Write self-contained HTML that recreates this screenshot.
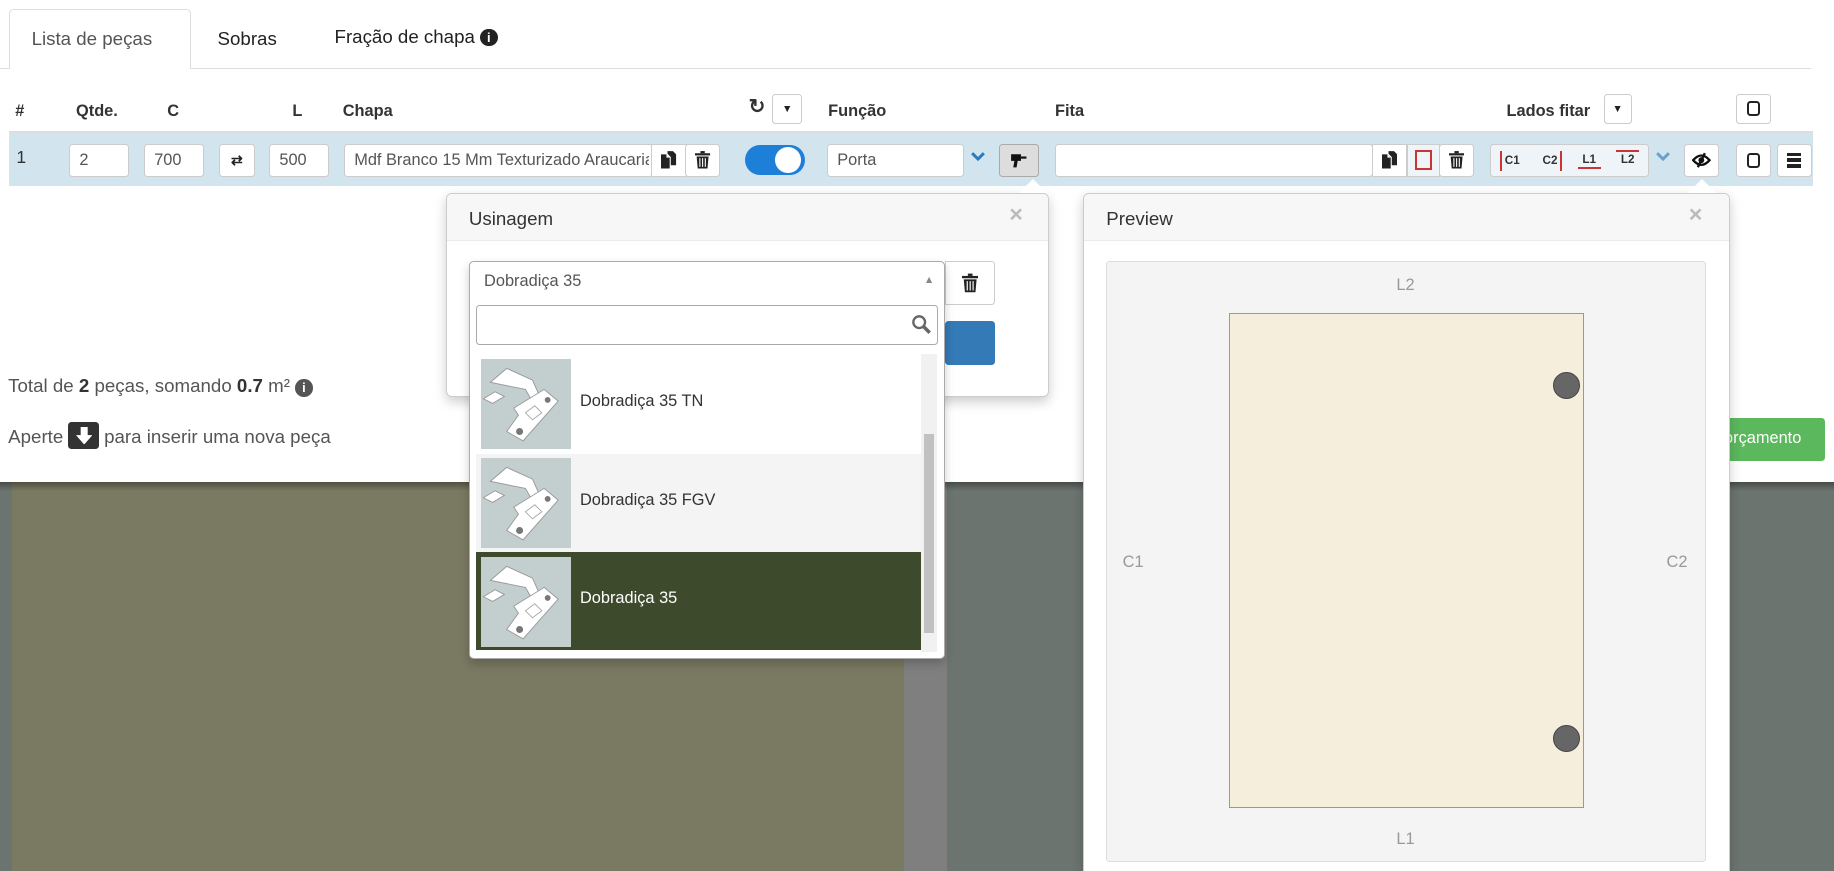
<!DOCTYPE html>
<html><head><meta charset="utf-8">
<style>
*{box-sizing:border-box;margin:0;padding:0}
html,body{width:1834px;height:871px;overflow:hidden;background:#fff}
#w{position:relative;width:1568px;height:745px;zoom:1.16964;font-family:"Liberation Sans",sans-serif;color:#333;font-size:14px;overflow:hidden}
.a{position:absolute}
.inp{position:absolute;background:#fff;border:1px solid #ccc;border-radius:3px;height:28px;top:123px;padding:5px 8px;font-size:14px;color:#555;white-space:nowrap;overflow:hidden}
.btn{position:absolute;background:#fff;border:1px solid #ccc;border-radius:3px;display:flex;align-items:center;justify-content:center;font-size:12px;font-weight:bold;color:#222}
.h{position:absolute;top:87px;font-weight:bold;font-size:14px;color:#333}
.thumb{position:absolute;width:77px;height:77px;background:#c3cfcf}
.item{position:absolute;left:5px;width:381px;height:84px}
.item span{position:absolute;left:89px;top:32px;font-size:14px}
</style></head><body><div id="w">
<svg width="0" height="0" style="position:absolute">
<defs>
<symbol id="trash" viewBox="0 0 14 16"><rect x="0" y="2" width="14" height="2" fill="#222"/><rect x="5" y="0" width="4" height="2" fill="#222"/><path d="M1.5 5h11l-1 11h-9z" fill="#222"/><path d="M4.5 6.5v8M7 6.5v8M9.5 6.5v8" stroke="#fff" stroke-width="1"/></symbol>
<symbol id="copy" viewBox="0 0 14 16"><path d="M0 3h5l3 3v10H0z" fill="#222"/><path d="M6 0h5l3 3v10H9V5.5L6 2.5z" fill="#222"/><path d="M5 3v3h3" fill="#fff"/></symbol>
<symbol id="drill" viewBox="0 0 16 16"><path d="M1 3h9v6H7l-1 6H3L4 9H1z" fill="#111"/><rect x="10" y="5" width="5" height="2" fill="#111"/></symbol>
<symbol id="hinge" viewBox="0 0 77 77"><path d="M8 20l14-12 22 10 8 18-6 4-8-14z" fill="#fff" stroke="#999" stroke-width=".8"/><path d="M2 34l10-6 8 4-10 6z" fill="#fff" stroke="#999" stroke-width=".8"/><path d="M28 42l26-16 12 10-30 34-14-8 10-14z" fill="#fff" stroke="#999" stroke-width=".8"/><circle cx="33" cy="62" r="3" fill="#777"/><circle cx="57" cy="35" r="2.5" fill="#777"/><path d="M38 46l8-6 6 6-8 6z" fill="none" stroke="#aaa" stroke-width=".8"/></symbol>
</defs></svg>
<!-- background lower -->
<div class="a" style="left:0;top:412px;width:1568px;height:333px;background:#6c7470"></div>
<div class="a" style="left:10px;top:412px;width:763px;height:333px;background:#7a7962"></div>
<div class="a" style="left:773px;top:412px;width:37px;height:333px;background:#7f7f7f"></div>
<div class="a" style="left:0;top:412px;width:1568px;height:8px;background:linear-gradient(rgba(0,0,0,.35),transparent)"></div>
<div class="a" style="left:0;top:0;width:1568px;height:412px;background:#fff"></div>
<!-- tabs -->
<div class="a" style="left:0;top:58px;width:1548px;height:1px;background:#ddd"></div>
<div class="a" style="left:8px;top:8px;width:155px;height:51px;border:1px solid #ddd;border-bottom:none;border-radius:4px 4px 0 0;background:#fff"></div>
<div class="a" style="left:27px;top:24px;font-size:16px;color:#555">Lista de peças</div>
<div class="a" style="left:186px;top:24px;font-size:16px;color:#222">Sobras</div>
<div class="a" style="left:286px;top:22px;font-size:16px;color:#222">Fração de chapa <span style="display:inline-block;width:15px;height:15px;border-radius:50%;background:#222;color:#fff;font-size:11px;text-align:center;line-height:15px;font-weight:bold;vertical-align:1px">i</span></div>
<!-- header -->
<div class="h" style="left:13px">#</div>
<div class="h" style="left:65px">Qtde.</div>
<div class="h" style="left:143px">C</div>
<div class="h" style="left:250px">L</div>
<div class="h" style="left:293px">Chapa</div>
<div class="a" style="left:640px;top:81px;font-size:17px;font-weight:bold">&#x21BB;</div>
<div class="btn" style="left:660px;top:80px;width:26px;height:26px;font-size:9px">&#9660;</div>
<div class="h" style="left:708px">Função</div>
<div class="h" style="left:902px">Fita</div>
<div class="h" style="left:1288px">Lados fitar</div>
<div class="btn" style="left:1371px;top:80px;width:24px;height:26px;font-size:9px">&#9660;</div>
<div class="btn" style="left:1484px;top:80px;width:30px;height:26px"><div style="width:11px;height:13px;border:2.5px solid #222;border-radius:3px"></div></div>
<!-- row -->
<div class="a" style="left:8px;top:112px;width:1542px;height:47px;background:#d2e4ee;border-top:2px solid #ddd"></div>
<div class="a" style="left:14px;top:126px;font-size:15px;color:#333">1</div>
<div class="inp" style="left:59px;width:51px">2</div>
<div class="inp" style="left:123px;width:51px">700</div>
<div class="btn" style="left:187px;top:123px;width:31px;height:28px">&#8644;</div>
<div class="inp" style="left:230px;width:51px">500</div>
<div class="inp" style="left:294px;width:264px;padding-right:0"><span style="display:block;width:252px;overflow:hidden">Mdf Branco 15 Mm Texturizado Araucaria</span></div>
<div class="btn" style="left:557px;top:123px;width:30px;height:28px;border-radius:0"><svg width="13" height="15"><use href="#copy"/></svg></div>
<div class="btn" style="left:586px;top:123px;width:30px;height:28px"><svg width="13" height="15"><use href="#trash"/></svg></div>
<div class="a" style="left:637px;top:124px;width:51px;height:26px;border-radius:13px;background:#1e7fd9"></div>
<div class="a" style="left:663px;top:126px;width:22px;height:22px;border-radius:50%;background:#fff"></div>
<div class="inp" style="left:707px;width:117px">Porta</div>
<svg class="a" style="left:830px;top:130px" width="12" height="9"><path d="M1 1l5 5 5-5" fill="none" stroke="#2a7ac0" stroke-width="2.5"/></svg>
<div class="btn" style="left:854px;top:123px;width:34px;height:28px;background:#ddd;border-color:#aaa"><svg width="15" height="15"><use href="#drill"/></svg></div>
<div class="inp" style="left:902px;width:272px"></div>
<div class="btn" style="left:1173px;top:123px;width:30px;height:28px;border-radius:0"><svg width="13" height="15"><use href="#copy"/></svg></div>
<div class="btn" style="left:1203px;top:123px;width:28px;height:28px;border-radius:0;background:#eef4f7"><div style="width:14px;height:17px;border:2px solid #c33"></div></div>
<div class="btn" style="left:1230px;top:123px;width:30px;height:28px"><svg width="13" height="15"><use href="#trash"/></svg></div>
<div class="a" style="left:1274px;top:123px;width:136px;height:28px;background:#eef4f7;border:1px solid #ccc;border-radius:3px;font-size:10px;font-weight:bold;color:#333">
<span class="a" style="left:8px;top:5px;border-left:2px solid #c33;padding:3px 2px">C1</span>
<span class="a" style="left:42px;top:5px;border-right:2px solid #c33;padding:3px 2px">C2</span>
<span class="a" style="left:74px;top:5px;border-bottom:2px solid #c33;padding:2px 4px 1px">L1</span>
<span class="a" style="left:107px;top:4px;border-top:2px solid #c33;padding:1px 4px 2px">L2</span></div>
<svg class="a" style="left:1416px;top:130px" width="12" height="9"><path d="M1 1l5 5 5-5" fill="none" stroke="#6aa0cc" stroke-width="2.5"/></svg>
<div class="btn" style="left:1440px;top:123px;width:30px;height:28px"><svg width="16" height="14"><path d="M1 7q7-8 14 0q-7 8-14 0z" fill="none" stroke="#111" stroke-width="2"/><circle cx="8" cy="7" r="2.5" fill="#111"/><line x1="11" y1="1" x2="5" y2="13" stroke="#111" stroke-width="2"/></svg></div>
<div class="btn" style="left:1484px;top:123px;width:30px;height:28px"><div style="width:11px;height:13px;border:2.5px solid #222;border-radius:3px"></div></div>
<div class="btn" style="left:1519px;top:123px;width:30px;height:28px;flex-direction:column;gap:2px"><i style="width:12px;height:3px;background:#222"></i><i style="width:12px;height:3px;background:#222"></i><i style="width:12px;height:3px;background:#222"></i></div>
<!-- totals -->
<div class="a" style="left:7px;top:321px;font-size:16px;color:#555">Total de <b style="color:#333">2</b> peças, somando <b style="color:#333">0.7</b> m² <span style="display:inline-block;width:15px;height:15px;border-radius:50%;background:#555;color:#fff;font-size:11px;text-align:center;line-height:15px;font-weight:bold">i</span></div>
<div class="a" style="left:7px;top:361px;font-size:16px;color:#555">Aperte <span style="display:inline-block;width:26px;height:23px;background:#333;border-radius:3px;vertical-align:-5px;position:relative"><svg style="position:absolute;left:6px;top:4px" width="14" height="15"><path d="M4 0h6v7h4l-7 8-7-8h4z" fill="#fff"/></svg></span> para inserir uma nova peça</div>
<div class="a" style="left:1466px;top:357px;width:94px;height:37px;background:#5cb85c;border-radius:3px;color:#fff;font-size:14px;padding:10px 0 0 8px">orçamento</div>
<!-- Usinagem popover -->
<div class="a" style="left:381px;top:165px;width:516px;height:174px;background:#fff;border:1px solid #ccc;border-radius:5px;box-shadow:0 4px 10px rgba(0,0,0,.2)">
<div class="a" style="left:0;top:0;width:514px;height:40px;background:#f7f7f7;border-bottom:1px solid #ebebeb;border-radius:5px 5px 0 0"></div>
<div class="a" style="left:19px;top:12px;font-size:16px">Usinagem</div>
<div class="a" style="left:481px;top:6px;font-size:20px;color:#bbb;font-weight:bold">×</div>
<div class="a" style="left:426px;top:57px;width:43px;height:38px;border:1px solid #ccc;border-radius:0 3px 3px 0;display:flex;align-items:center;justify-content:center"><svg width="14" height="17"><use href="#trash"/></svg></div>
<div class="a" style="left:426px;top:109px;width:43px;height:37px;background:#337ab7;border-radius:3px"></div>
</div>
<div class="a" style="left:871px;top:153px;width:0;height:0;border:12px solid transparent;border-bottom-color:#fff;border-top:none"></div>
<!-- dropdown -->
<div class="a" style="left:401px;top:223px;width:407px;height:340px;background:#fff;border:1px solid #aaa;border-radius:4px;box-shadow:0 4px 8px rgba(0,0,0,.2)">
<div class="a" style="left:12px;top:9px;font-size:14px;color:#555">Dobradiça 35</div>
<div class="a" style="left:388px;top:10px;font-size:9px;color:#888">&#9650;</div>
<div class="a" style="left:5px;top:37px;width:395px;height:34px;border:1px solid #aaa;border-radius:3px"></div>
<svg class="a" style="left:377px;top:45px" width="18" height="18"><circle cx="7" cy="7" r="5" fill="none" stroke="#666" stroke-width="2"/><line x1="11" y1="11" x2="16" y2="16" stroke="#666" stroke-width="3"/></svg>
<div class="item" style="top:79px;background:#fff"><svg class="thumb" style="left:4px;top:4px"><use href="#hinge"/></svg><span>Dobradiça 35 TN</span></div>
<div class="item" style="top:164px;background:#f4f4f4"><svg class="thumb" style="left:4px;top:4px"><use href="#hinge"/></svg><span>Dobradiça 35 FGV</span></div>
<div class="item" style="top:248px;background:#3d4a2b"><svg class="thumb" style="left:4px;top:4px"><use href="#hinge"/></svg><span style="color:#fff">Dobradiça 35</span></div>
<div class="a" style="left:386px;top:79px;width:13px;height:255px;background:#f1f1f1"></div>
<div class="a" style="left:388px;top:147px;width:9px;height:170px;background:#c1c1c1"></div>
</div>
<!-- Preview popover -->
<div class="a" style="left:926px;top:165px;width:553px;height:600px;background:#fff;border:1px solid #ccc;border-radius:5px;box-shadow:0 4px 10px rgba(0,0,0,.2)">
<div class="a" style="left:0;top:0;width:551px;height:40px;background:#f7f7f7;border-bottom:1px solid #ebebeb;border-radius:5px 5px 0 0"></div>
<div class="a" style="left:19px;top:12px;font-size:16px">Preview</div>
<div class="a" style="left:517px;top:6px;font-size:20px;color:#bbb;font-weight:bold">×</div>
<div class="a" style="left:19px;top:57px;width:513px;height:514px;background:#f4f4f4;border:1px solid #ddd;border-radius:3px"></div>
<div class="a" style="left:124px;top:102px;width:303px;height:423px;background:#f5eedc;border:1px solid #999"></div>
<div class="a" style="left:401px;top:152px;width:23px;height:23px;border-radius:50%;background:#666;border:1px solid #444"></div>
<div class="a" style="left:401px;top:454px;width:23px;height:23px;border-radius:50%;background:#666;border:1px solid #444"></div>
<div class="a" style="left:267px;top:70px;color:#999;font-size:14px">L2</div>
<div class="a" style="left:267px;top:544px;color:#999;font-size:14px">L1</div>
<div class="a" style="left:33px;top:307px;color:#999;font-size:14px">C1</div>
<div class="a" style="left:498px;top:307px;color:#999;font-size:14px">C2</div>
</div>
<div class="a" style="left:1443px;top:153px;width:0;height:0;border:12px solid transparent;border-bottom-color:#fff;border-top:none"></div>
</div>
</body></html>
